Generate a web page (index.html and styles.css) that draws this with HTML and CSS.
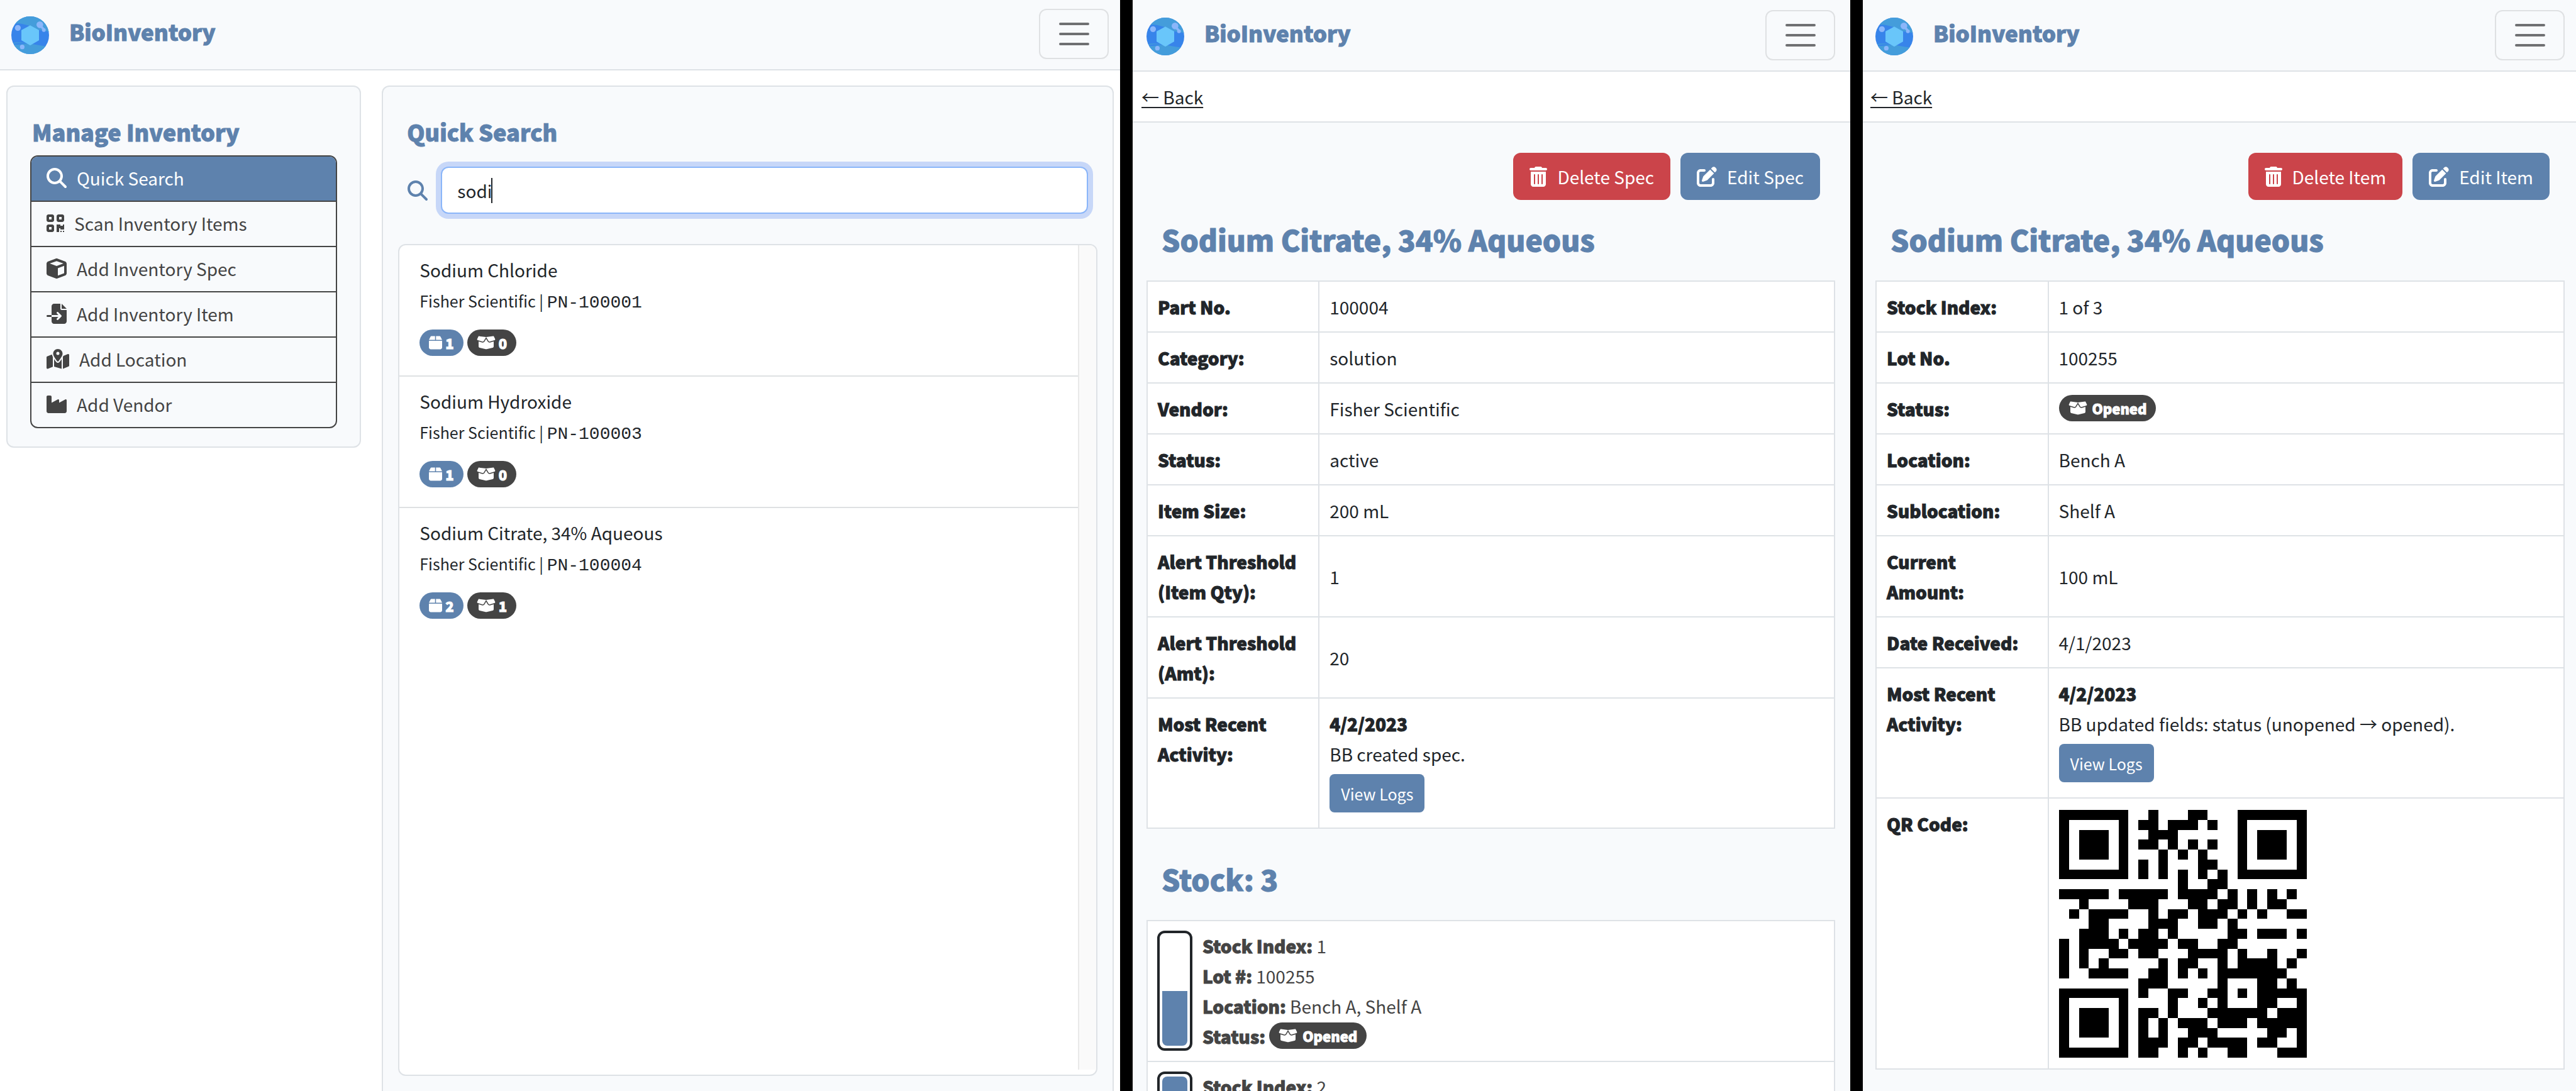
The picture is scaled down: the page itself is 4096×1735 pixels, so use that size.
FILE: index.html
```html
<!DOCTYPE html>
<html lang="en">
<head>
<meta charset="utf-8">
<title>BioInventory</title>
<link rel="stylesheet" href="styles.css">
</head>
<body>
<svg class="sprite" aria-hidden="true">
  <symbol id="logo" viewBox="54 47 180 180">
    <clipPath id="disc"><circle cx="144" cy="137" r="90"/></clipPath>
    <g clip-path="url(#disc)">
      <rect x="54" y="47" width="180" height="180" fill="#3784ea"/>
      <path fill="#449ddb" d="M54 47H234V121C222 116 206 116 186 112C160 104 136 84 84 81L54 84Z"/>
      <path fill="#449ddb" d="M60 181C90 184 110 178 135 177C165 180 200 190 234 190V227H54Z"/>
      <path fill="#449ddb" d="M62 173C85 168 105 172 122 173L122 175C100 174 85 173 64 178Z"/>
      <g fill="#8bb6fa"><circle cx="85" cy="102" r="14"/><circle cx="190" cy="87" r="16"/><circle cx="209" cy="112" r="9"/><circle cx="106" cy="193" r="11"/><path d="M194 102l8-9 9 11-8 6z"/></g>
      <path fill="#69c6fa" stroke="#69c6fa" stroke-width="4" stroke-linejoin="round" d="M144 92L184 114V160L144 183L104 160V114Z"/>
    </g>
  </symbol>
  <symbol id="bars" viewBox="0 0 30 30"><path fill="none" stroke="#6f7072" stroke-width="2" stroke-linecap="round" d="M4 7h22M4 15h22M4 23h22"/></symbol>
  <symbol id="search" viewBox="0 0 512 512"><path d="M416 208c0 45.900-14.900 88.300-40 122.700L502.600 457.400c12.500 12.500 12.500 32.800 0 45.300s-32.800 12.500-45.300 0L330.700 376c-34.400 25.200-76.800 40-122.700 40C93.100 416 0 322.900 0 208S93.100 0 208 0S416 93.100 416 208zM208 352a144 144 0 1 0 0-288 144 144 0 1 0 0 288z"/></symbol>
  <symbol id="qrcode" viewBox="0 0 448 512"><path d="M0 80C0 53.500 21.500 32 48 32h96c26.500 0 48 21.500 48 48v96c0 26.500-21.500 48-48 48H48c-26.500 0-48-21.500-48-48V80zM64 96v64h64V96H64zM0 336c0-26.500 21.500-48 48-48h96c26.500 0 48 21.500 48 48v96c0 26.500-21.500 48-48 48H48c-26.500 0-48-21.500-48-48V336zm64 16v64h64V352H64zM304 32h96c26.500 0 48 21.500 48 48v96c0 26.500-21.500 48-48 48H304c-26.500 0-48-21.500-48-48V80c0-26.500 21.500-48 48-48zm80 64H320v64h64V96zM256 288h96v32h64v-32h32v128h-96v-32h-32v96h-64zM352 448h32v32h-32zM416 448h32v32h-32z"/></symbol>
  <symbol id="cube" viewBox="0 0 512 512"><path d="M234.500 5.700c13.900-5 29.100-5 43.100 0l192 68.600C495 83.400 512 107.500 512 134.600V377.400c0 27-17 51.200-42.500 60.300l-192 68.600c-13.900 5-29.100 5-43.100 0l-192-68.600C17 428.600 0 404.500 0 377.400V134.600c0-27 17-51.200 42.500-60.300l192-68.600zM256 66L82.300 128 256 190l173.700-62L256 66zm32 368.600l160-57.100v-188L288 246.600v188z"/></symbol>
  <symbol id="import" viewBox="0 0 512 512"><path d="M128 64c0-35.300 28.700-64 64-64H352V128c0 17.700 14.300 32 32 32H512V448c0 35.300-28.700 64-64 64H192c-35.300 0-64-28.700-64-64V336H302.100l-39 39c-9.400 9.400-9.400 24.600 0 33.900s24.600 9.400 33.900 0l80-80c9.400-9.400 9.400-24.600 0-33.900l-80-80c-9.400-9.400-24.600-9.400-33.900 0s-9.400 24.600 0 33.900l39 39H128V64zm0 224v48H24c-13.300 0-24-10.700-24-24s10.700-24 24-24H128zM512 128H384V0L512 128z"/></symbol>
  <symbol id="map" viewBox="0 0 576 512"><path d="M408 120c0 54.600-73.100 151.900-105.200 192c-7.700 9.600-22 9.600-29.600 0C241.100 271.900 168 174.600 168 120C168 53.700 221.700 0 288 0s120 53.700 120 120zm8 80.400c3.500-6.900 6.700-13.800 9.600-20.600c.5-1.200 1-2.500 1.500-3.700l116-46.400C558.900 123.400 576 135 576 152V422.800c0 9.800-6 18.600-15.100 22.300L416 503V200.400zM137.600 138.300c2.400 14.100 7.200 28.300 12.800 41.500c2.900 6.800 6.100 13.700 9.600 20.600V451.800L32.900 502.700C17.100 509 0 497.400 0 480.400V209.600c0-9.800 6-18.600 15.100-22.300l122.600-49zM327.800 332c13.900-17.400 35.700-45.700 56.200-77V504.300L192 449.400V255c20.500 31.300 42.300 59.600 56.200 77c20.500 25.600 59.100 25.600 79.600 0zM288 152a40 40 0 1 0 0-80 40 40 0 1 0 0 80z"/></symbol>
  <symbol id="industry" viewBox="0 0 512 512"><path d="M32 32C14.300 32 0 46.300 0 64V432c0 26.500 21.500 48 48 48H464c26.500 0 48-21.500 48-48V152.200c0-18.200-19.400-29.700-35.400-21.100L320 215.400V152.200c0-18.200-19.400-29.700-35.400-21.100L128 215.400V64c0-17.700-14.300-32-32-32H32z"/></symbol>
  <symbol id="box" viewBox="0 0 448 512"><path d="M50.700 58.500L0 160H208V32H93.700C75.500 32 58.900 42.300 50.700 58.500zM240 160H448L397.300 58.500C389.100 42.300 372.500 32 354.300 32H240V160zm208 32H0V416c0 35.300 28.700 64 64 64H384c35.300 0 64-28.700 64-64V192z"/></symbol>
  <symbol id="open" viewBox="0 0 640 512"><path d="M58.900 42.100c3-6.100 9.600-9.600 16.300-8.700L320 64 564.800 33.400c6.700-.8 13.300 2.700 16.300 8.700l41.700 83.400c9 17.900-.6 39.600-19.800 45.100L439.600 217.300c-13.900 4-28.800-1.900-36.200-14.300L320 64 236.600 203c-7.400 12.400-22.300 18.300-36.200 14.300L37.100 170.600c-19.300-5.500-28.800-27.200-19.800-45.100L58.900 42.100zM321.100 128l54.900 91.400c14.900 24.800 44.600 36.600 72.500 28.600L576 211.600v167c0 22-15 41.200-36.400 46.600l-204.100 51c-10.200 2.600-20.900 2.600-31 0l-204.100-51C79 419.700 64 400.500 64 378.500v-167L191.600 248c27.800 8 57.600-3.800 72.500-28.600L318.900 128h2.200z"/></symbol>
  <symbol id="trash" viewBox="0 0 448 512"><path d="M135.200 17.700L128 32H32C14.300 32 0 46.300 0 64S14.300 96 32 96H416c17.700 0 32-14.300 32-32s-14.300-32-32-32H320l-7.200-14.300C307.400 6.800 296.300 0 284.200 0H163.800c-12.100 0-23.200 6.800-28.600 17.700zM416 128H32V448c0 35.300 28.700 64 64 64H352c35.300 0 64-28.700 64-64V128zM144 208V432c0 8.800-7.200 16-16 16s-16-7.200-16-16V208c0-8.800 7.200-16 16-16s16 7.200 16 16zm96 0V432c0 8.800-7.200 16-16 16s-16-7.200-16-16V208c0-8.800 7.200-16 16-16s16 7.200 16 16zm96 0V432c0 8.800-7.200 16-16 16s-16-7.200-16-16V208c0-8.800 7.200-16 16-16s16 7.200 16 16z"/></symbol>
  <symbol id="edit" viewBox="0 0 512 512"><path d="M471.600 21.700c-21.900-21.900-57.300-21.900-79.200 0L362.300 51.700l97.900 97.900 30.100-30.100c21.900-21.900 21.900-57.300 0-79.200L471.600 21.700zm-299.200 220c-6.100 6.100-10.800 13.600-13.500 21.900l-29.600 88.800c-2.900 8.600-.6 18.100 5.800 24.600s15.900 8.700 24.600 5.800l88.800-29.600c8.200-2.700 15.700-7.400 21.900-13.500L437.700 172.300 339.700 74.300 172.400 241.700zM96 64C43 64 0 107 0 160V416c0 53 43 96 96 96H352c53 0 96-43 96-96V320c0-17.700-14.300-32-32-32s-32 14.300-32 32v96c0 17.700-14.300 32-32 32H96c-17.700 0-32-14.300-32-32V160c0-17.700 14.300-32 32-32h96c17.700 0 32-14.300 32-32s-14.300-32-32-32H96z"/></symbol>
</svg>

<div class="screens">
  <section class="screen screen-home">
    <header class="navbar">
      <a class="brand" href="#"><svg class="logo"><use href="#logo"/></svg>BioInventory</a>
      <button class="toggler" type="button" aria-label="Menu"><svg><use href="#bars"/></svg></button>
    </header>
    <main class="home">
      <aside class="card card-menu">
        <h2 class="card-title">Manage Inventory</h2>
        <nav class="menu">
          <a class="active" href="#"><svg class="icon"><use href="#search"/></svg>Quick Search</a>
          <a href="#"><svg class="icon icon-narrow"><use href="#qrcode"/></svg>Scan Inventory Items</a>
          <a href="#"><svg class="icon"><use href="#cube"/></svg>Add Inventory Spec</a>
          <a href="#"><svg class="icon"><use href="#import"/></svg>Add Inventory Item</a>
          <a href="#"><svg class="icon icon-wide"><use href="#map"/></svg>Add Location</a>
          <a href="#"><svg class="icon"><use href="#industry"/></svg>Add Vendor</a>
        </nav>
      </aside>
      <section class="card card-search">
        <h2 class="card-title">Quick Search</h2>
        <div class="search">
          <label for="q" aria-label="Search"><svg class="icon"><use href="#search"/></svg></label>
          <div class="search-box">
            <input id="q" type="text" value="sodi">
            <span class="caret"></span>
          </div>
        </div>
        <div class="results">
          <ul>
            <li>
              <div class="name">Sodium Chloride</div>
              <div class="vendor">Fisher Scientific | <code>PN-100001</code></div>
              <div class="badges"><span class="badge badge-primary"><svg class="box"><use href="#box"/></svg>1</span><span class="badge"><svg class="box-open"><use href="#open"/></svg>0</span></div>
            </li>
            <li>
              <div class="name">Sodium Hydroxide</div>
              <div class="vendor">Fisher Scientific | <code>PN-100003</code></div>
              <div class="badges"><span class="badge badge-primary"><svg class="box"><use href="#box"/></svg>1</span><span class="badge"><svg class="box-open"><use href="#open"/></svg>0</span></div>
            </li>
            <li>
              <div class="name">Sodium Citrate, 34% Aqueous</div>
              <div class="vendor">Fisher Scientific | <code>PN-100004</code></div>
              <div class="badges"><span class="badge badge-primary"><svg class="box"><use href="#box"/></svg>2</span><span class="badge"><svg class="box-open"><use href="#open"/></svg>1</span></div>
            </li>
          </ul>
          <div class="track"></div>
        </div>
      </section>
    </main>
  </section>

  <section class="screen screen-spec">
    <header class="navbar">
      <a class="brand" href="#"><svg class="logo"><use href="#logo"/></svg>BioInventory</a>
      <button class="toggler" type="button" aria-label="Menu"><svg><use href="#bars"/></svg></button>
    </header>
    <div class="backbar"><a href="#">← Back</a></div>
    <main class="detail">
      <div class="actions">
        <button class="btn btn-danger" type="button"><svg class="icon icon-narrow"><use href="#trash"/></svg>Delete Spec</button>
        <button class="btn" type="button"><svg class="icon"><use href="#edit"/></svg>Edit Spec</button>
      </div>
      <h1>Sodium Citrate, 34% Aqueous</h1>
      <table class="facts">
        <tr><th scope="row">Part No.</th><td>100004</td></tr>
        <tr><th scope="row">Category:</th><td>solution</td></tr>
        <tr><th scope="row">Vendor:</th><td>Fisher Scientific</td></tr>
        <tr><th scope="row">Status:</th><td>active</td></tr>
        <tr><th scope="row">Item Size:</th><td>200 mL</td></tr>
        <tr><th scope="row">Alert Threshold (Item Qty):</th><td>1</td></tr>
        <tr><th scope="row">Alert Threshold (Amt):</th><td>20</td></tr>
        <tr><th scope="row">Most Recent Activity:</th><td><strong>4/2/2023</strong><br>BB created spec.<button class="btn btn-small" type="button">View Logs</button></td></tr>
      </table>
      <h1 class="stock-title">Stock: 3</h1>
      <ul class="stock">
        <li>
          <div class="tube"><div class="level" style="height:50%"></div></div>
          <div>
            <div><strong>Stock Index:</strong> 1</div>
            <div><strong>Lot #:</strong> 100255</div>
            <div><strong>Location:</strong> Bench A, Shelf A</div>
            <div><strong>Status:</strong> <span class="badge badge-status"><svg class="box-open"><use href="#open"/></svg>Opened</span></div>
          </div>
        </li>
        <li>
          <div class="tube"><div class="level level-full" style="height:100%"></div></div>
          <div>
            <div><strong>Stock Index:</strong> 2</div>
          </div>
        </li>
      </ul>
    </main>
  </section>

  <section class="screen screen-item">
    <header class="navbar">
      <a class="brand" href="#"><svg class="logo"><use href="#logo"/></svg>BioInventory</a>
      <button class="toggler" type="button" aria-label="Menu"><svg><use href="#bars"/></svg></button>
    </header>
    <div class="backbar"><a href="#">← Back</a></div>
    <main class="detail">
      <div class="actions">
        <button class="btn btn-danger" type="button"><svg class="icon icon-narrow"><use href="#trash"/></svg>Delete Item</button>
        <button class="btn" type="button"><svg class="icon"><use href="#edit"/></svg>Edit Item</button>
      </div>
      <h1>Sodium Citrate, 34% Aqueous</h1>
      <table class="facts">
        <tr><th scope="row">Stock Index:</th><td>1 of 3</td></tr>
        <tr><th scope="row">Lot No.</th><td>100255</td></tr>
        <tr><th scope="row">Status:</th><td><span class="badge badge-status"><svg class="box-open"><use href="#open"/></svg>Opened</span></td></tr>
        <tr><th scope="row">Location:</th><td>Bench A</td></tr>
        <tr><th scope="row">Sublocation:</th><td>Shelf A</td></tr>
        <tr><th scope="row">Current Amount:</th><td>100 mL</td></tr>
        <tr><th scope="row">Date Received:</th><td>4/1/2023</td></tr>
        <tr><th scope="row">Most Recent Activity:</th><td><strong>4/2/2023</strong><br>BB updated fields: status (unopened → opened).<button class="btn btn-small" type="button">View Logs</button></td></tr>
        <tr><th scope="row">QR Code:</th><td>
          <svg class="qr" viewBox="0 0 25 25" role="img" aria-label="QR code">
            <path fill-rule="evenodd" d="M0 0h7v7h-7zM1 1v5h5v-5zM2 2h3v3h-3zM18 0h7v7h-7zM19 1v5h5v-5zM20 2h3v3h-3zM0 18h7v7h-7zM1 19v5h5v-5zM2 20h3v3h-3z"/>
            <path d="M9 0h1v1h-1zM13 0h2v1h-2zM8 1h2v1h-2zM11 1h3v1h-3zM15 1h1v1h-1zM9 2h3v1h-3zM8 3h2v1h-2zM11 3h1v1h-1zM13 3h1v1h-1zM15 3h1v1h-1zM10 4h1v1h-1zM12 4h1v1h-1zM14 4h1v1h-1zM8 5h1v1h-1zM10 5h1v1h-1zM14 5h2v1h-2zM8 6h1v1h-1zM10 6h1v1h-1zM12 6h1v1h-1zM14 6h1v1h-1zM16 6h1v1h-1zM12 7h1v1h-1zM15 7h2v1h-2z"/>
            <path d="M0 8h5v1h-5zM6 8h5v1h-5zM12 8h4v1h-4zM17 8h1v1h-1zM19 8h1v1h-1zM21 8h1v1h-1zM23 8h1v1h-1zM2 9h1v1h-1zM7 9h3v1h-3zM13 9h2v1h-2zM16 9h2v1h-2zM19 9h1v1h-1zM21 9h2v1h-2zM1 10h1v1h-1zM3 10h4v1h-4zM9 10h1v1h-1zM11 10h2v1h-2zM14 10h3v1h-3zM18 10h1v1h-1zM20 10h1v1h-1zM23 10h2v1h-2zM3 11h2v1h-2zM9 11h3v1h-3zM14 11h2v1h-2zM17 11h1v1h-1zM2 12h3v1h-3zM6 12h1v1h-1zM8 12h2v1h-2zM11 12h1v1h-1zM17 12h2v1h-2zM20 12h3v1h-3zM24 12h1v1h-1z"/>
            <path d="M0 13h1v1h-1zM2 13h4v1h-4zM7 13h4v1h-4zM12 13h2v1h-2zM16 13h2v1h-2zM0 14h1v1h-1zM2 14h1v1h-1zM5 14h2v1h-2zM8 14h2v1h-2zM13 14h4v1h-4zM18 14h1v1h-1zM21 14h1v1h-1zM24 14h1v1h-1zM0 15h1v1h-1zM2 15h1v1h-1zM4 15h1v1h-1zM10 15h1v1h-1zM12 15h2v1h-2zM16 15h1v1h-1zM18 15h4v1h-4zM23 15h1v1h-1zM0 16h1v1h-1zM3 16h4v1h-4zM9 16h2v1h-2zM12 16h1v1h-1zM14 16h1v1h-1zM16 16h7v1h-7zM8 17h3v1h-3zM16 17h1v1h-1zM20 17h2v1h-2zM23 17h1v1h-1z"/>
            <path d="M8 18h1v1h-1zM11 18h2v1h-2zM15 18h2v1h-2zM18 18h1v1h-1zM20 18h5v1h-5zM11 19h1v1h-1zM14 19h1v1h-1zM16 19h1v1h-1zM20 19h2v1h-2zM24 19h1v1h-1zM8 20h2v1h-2zM11 20h1v1h-1zM15 20h6v1h-6zM22 20h3v1h-3zM8 21h1v1h-1zM10 21h1v1h-1zM12 21h3v1h-3zM16 21h3v1h-3zM20 21h5v1h-5zM8 22h1v1h-1zM10 22h1v1h-1zM13 22h3v1h-3zM21 22h2v1h-2zM24 22h1v1h-1zM8 23h3v1h-3zM12 23h2v1h-2zM15 23h4v1h-4zM20 23h2v1h-2zM24 23h1v1h-1zM8 24h2v1h-2zM12 24h1v1h-1zM14 24h1v1h-1zM17 24h2v1h-2zM22 24h3v1h-3z"/>
          </svg>
        </td></tr>
      </table>
    </main>
  </section>
</div>
</body>
</html>
```
FILE: styles.css
```css
:root {
  --primary: #5e82ad;
  --danger: #cb444a;
  --dark: #444;
  --ink: #212529;
  --line: #dee2e6;
  --surface: #f8fafc;
  --gutter-left: 22px;
  --gutter-right: 24px;
}

*, *::before, *::after { box-sizing: border-box; }

body {
  margin: 0;
  color: var(--ink);
  background: #000;
  font: 28px/48px "Noto Sans CJK JP", "Noto Sans", sans-serif;
}

ul { list-style: none; margin: 0; padding: 0; }
svg { display: block; fill: currentColor; flex: none; }
strong, th { font-weight: 900; }
strong, th, h1, h2, .brand, .badge { -webkit-text-stroke: 1px currentColor; }
button, input { font: inherit; color: inherit; }
.sprite { position: absolute; width: 0; height: 0; }

.screens {
  display: grid;
  grid-template-columns: 1781fr 1141fr 1134fr;
  gap: 20px;
  height: 100vh;
}

.screen {
  display: flex;
  flex-direction: column;
  min-width: 0;
  overflow: hidden;
  background: #fff;
}

.screen-home { --gutter-left: 18px; --gutter-right: 18px; }
.screen-item { --gutter-left: 20px; --gutter-right: 18px; }

.navbar {
  display: flex;
  align-items: center;
  justify-content: space-between;
  padding: 16px var(--gutter-right) 16px var(--gutter-left);
  background: var(--surface);
  border-bottom: 2px solid var(--line);
}
.screen-home .navbar { padding-top: 14px; }

.brand {
  display: flex;
  align-items: flex-start;
  gap: 32px;
  color: var(--primary);
  font-size: 35px;
  font-weight: 900;
  line-height: 56px;
  text-decoration: none;
}
.logo { width: 60px; height: 60px; margin-top: 4px; }

.toggler {
  display: flex;
  align-items: center;
  justify-content: center;
  width: 111px;
  height: 80px;
  padding: 0;
  background: none;
  border: 2px solid #dfe1e3;
  border-radius: 12px;
}
.toggler svg { width: 60px; height: 60px; }

.icon { width: 32px; height: 32px; }
.icon-narrow { width: 28px; }
.icon-wide { width: 36px; }

/* Home screen */
.home {
  flex: 1;
  display: grid;
  grid-template-columns: 564fr 1163fr;
  gap: 33px;
  align-items: start;
  min-height: 0;
  padding: 24px 10px 0;
}

.card {
  padding: 47px 24px 29px;
  background: var(--surface);
  border: 2px solid var(--line);
  border-radius: 12px;
}
.card-menu { padding: 47px 36px 29px; }
.card-search {
  display: flex;
  flex-direction: column;
  height: 100%;
  padding-bottom: 24px;
  border-bottom: 0;
  border-radius: 12px 12px 0 0;
}
.card-title {
  margin: 0;
  color: var(--primary);
  font-size: 36px;
  font-weight: 900;
  line-height: 48px;
}
.card-menu .card-title { padding-left: 3px; }
.card-search .card-title { padding-left: 14px; }

.menu {
  margin-top: 14px;
  overflow: hidden;
  border: 2px solid var(--dark);
  border-radius: 12px;
}
.menu a {
  display: flex;
  align-items: center;
  gap: 16px;
  padding: 10px 24px 12px;
  color: var(--dark);
  text-decoration: none;
}
.menu a + a { border-top: 2px solid var(--dark); }
.menu .active { color: #fff; background: var(--primary); }

.search {
  display: flex;
  align-items: center;
  gap: 21px;
  margin-top: 32px;
  padding: 0 15px;
}
.search label { color: var(--primary); }
.search-box { position: relative; flex: 1; }
.search-box input {
  display: block;
  width: 100%;
  height: 75px;
  padding: 0 24px;
  background: #fff;
  border: 2px solid #8bb6f9;
  border-radius: 12px;
  box-shadow: 0 0 0 8px #c7d7f8;
  outline: none;
}
.caret {
  position: absolute;
  top: 18px;
  left: 80px;
  width: 2px;
  height: 40px;
  background: var(--ink);
}

.results {
  flex: 1;
  display: flex;
  min-height: 0;
  margin-top: 48px;
  overflow: hidden;
  background: #fff;
  border: 2px solid var(--line);
  border-radius: 12px;
}
.results ul { flex: 1; }
.results li {
  padding: 15px 32px 31px;
  border-bottom: 2px solid #dfe1e3;
}
.results li:last-child { border-bottom: 0; }
.track {
  width: 29px;
  margin-bottom: 8px;
  background: #fafafa;
  border-left: 2px solid #e9e9e9;
}
.vendor { font-size: 25px; line-height: 50px; }
code { font: 28px/24px "Liberation Mono", monospace; }
.badges { display: flex; gap: 6px; margin-top: 21px; }

.badge {
  display: inline-flex;
  align-items: center;
  gap: 5px;
  height: 42px;
  padding: 0 15px;
  color: #fff;
  background: var(--dark);
  border-radius: 21px;
  font-size: 22px;
  font-weight: 900;
  line-height: 40px;
}
.badge-primary { background: var(--primary); }
.badge-status { gap: 8px; margin-top: 2px; vertical-align: top; }
.box { width: 21px; height: 24px; }
.box-open { width: 30px; height: 24px; }

/* Detail screens */
.backbar {
  padding: 16px 14px 15px;
  border-bottom: 2px solid var(--line);
}
.screen-item .backbar { padding-left: 12px; }
.backbar a { color: inherit; text-underline-offset: 4px; }

.detail {
  flex: 1;
  min-height: 0;
  padding: 48px var(--gutter-right) 0 var(--gutter-left);
  background: var(--surface);
}
.actions {
  display: flex;
  justify-content: flex-end;
  gap: 16px;
  padding-right: 24px;
}
.btn {
  display: flex;
  align-items: center;
  gap: 16px;
  height: 75px;
  padding: 0 26px;
  color: #fff;
  background: var(--primary);
  border: 0;
  border-radius: 12px;
}
.btn-danger { background: var(--danger); }
.btn-small {
  height: 61px;
  margin: 8px 0 9px;
  padding: 0 18px;
  border-radius: 8px;
  font-size: 25px;
}

h1 {
  margin: 32px 0 36px;
  padding-left: 24px;
  color: var(--primary);
  font-size: 46px;
  font-weight: 900;
  line-height: 60px;
}
.stock-title { margin-top: 49px; }

.facts {
  width: 100%;
  table-layout: fixed;
  border-collapse: collapse;
  background: #fff;
}
.facts th, .facts td {
  padding: 16px 16px 15px;
  border: 2px solid var(--line);
  text-align: left;
}
.facts th { width: 25%; padding-right: 30px; vertical-align: top; }
.qr { width: 394px; height: 394px; margin: 2px 0; fill: #000; shape-rendering: crispEdges; }

.stock {
  color: var(--dark);
  background: #fff;
  border: 2px solid var(--line);
}
.stock li {
  display: flex;
  gap: 16px;
  padding: 15px 15px;
}
.stock li + li { border-top: 2px solid var(--line); }
.tube {
  display: flex;
  align-items: flex-end;
  width: 56px;
  height: 191px;
  padding: 4px;
  border: 4px solid var(--ink);
  border-radius: 12px;
}
.level {
  width: 100%;
  background: var(--primary);
  border-radius: 0 0 8px 8px;
}
.level-full { border-radius: 8px; }
```
